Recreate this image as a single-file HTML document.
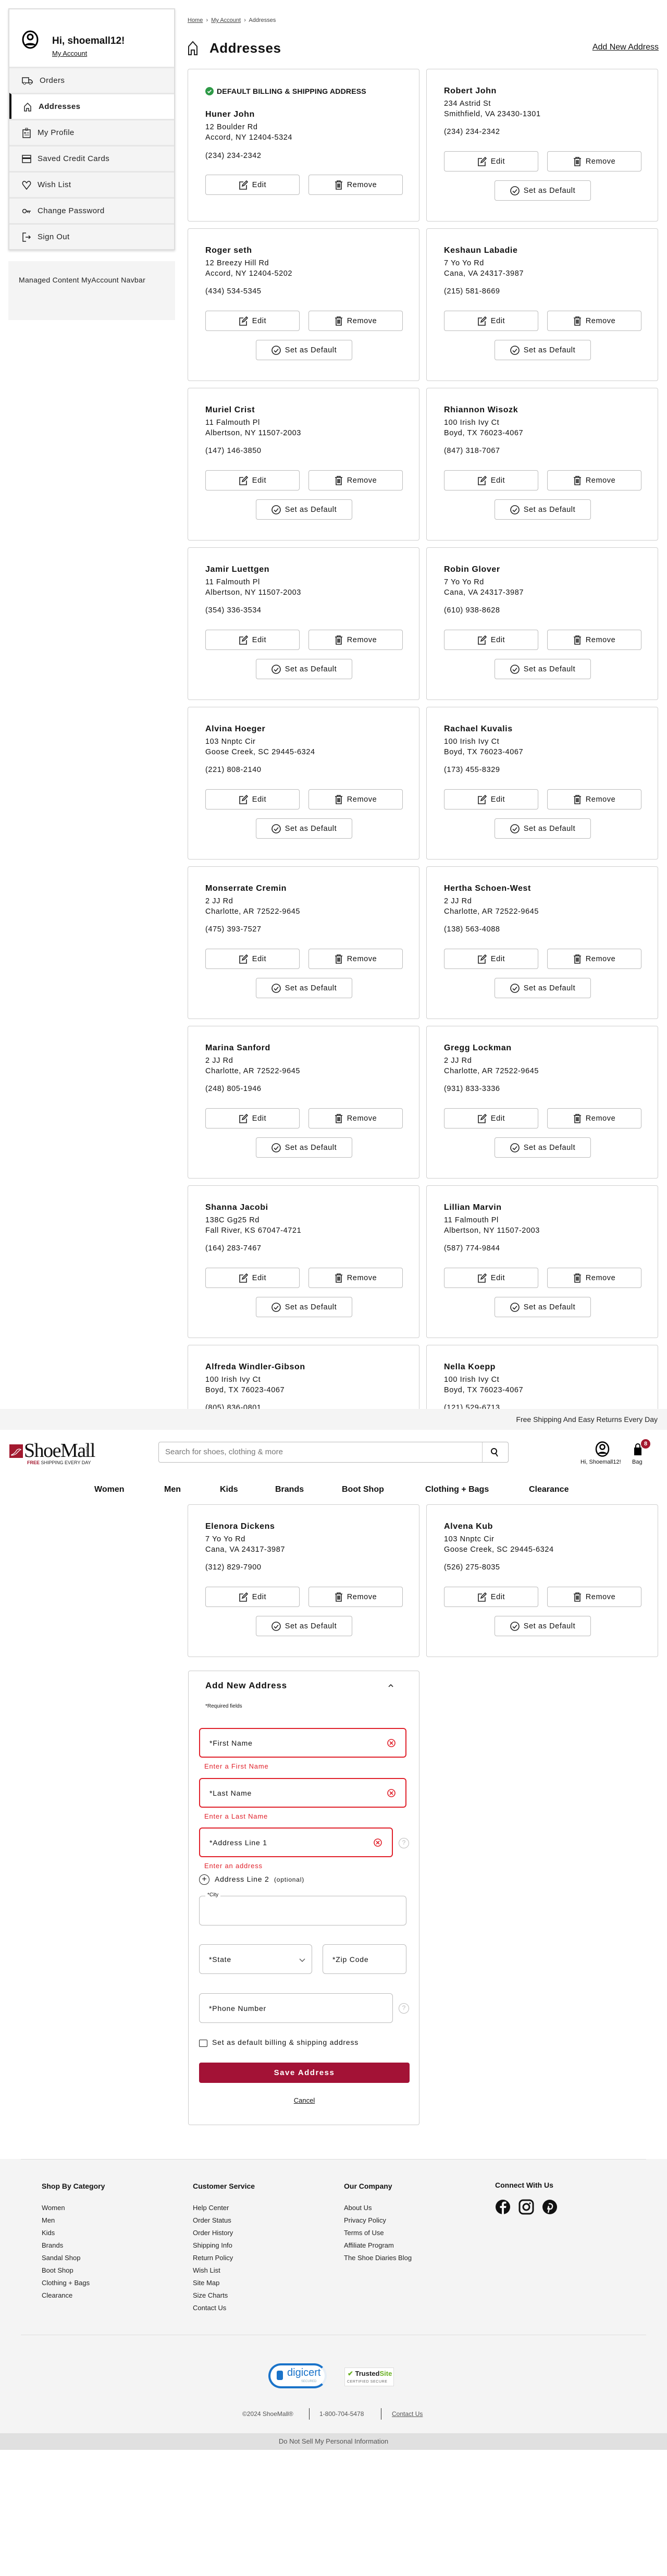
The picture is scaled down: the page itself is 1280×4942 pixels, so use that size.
<!DOCTYPE html>
<html><head><meta charset="utf-8">
<style>
*{box-sizing:border-box;margin:0;padding:0}
body{width:1280px;height:4942px;position:relative;background:#fff;font-family:"Liberation Sans",sans-serif;color:#111;overflow:hidden}
.abs{position:absolute}
.side{left:16px;top:16px;width:320px;height:464px;border:2px solid #ddd;box-shadow:0 2px 4px rgba(0,0,0,.15);background:#fff}
.side .hd{height:110px;position:relative}
.mi{height:50px;background:#f4f4f4;border-top:3px solid #e6e6e6;display:flex;align-items:center;padding-left:24px;font-size:15px;color:#222;letter-spacing:.4px}
.mi svg{margin-right:12px}
.mi.act{background:#fff;border-left:4px solid #111;font-weight:bold;padding-left:22px}
.card{position:absolute;width:445px;height:293px;border:1px solid #cfcfcf;border-radius:4px;background:#fff;letter-spacing:.6px}
.card .n{position:absolute;left:33px;top:33px;font-size:16px;font-weight:bold}
.card .a{position:absolute;left:33px;top:56px;font-size:14.5px;line-height:20px}
.card .p{position:absolute;left:33px;top:112px;font-size:14.5px}
.btn{position:absolute;height:39px;border:1px solid #bbb;border-radius:4px;display:flex;align-items:center;justify-content:center;font-size:14.5px;background:#fff;gap:8px}
.b1{left:33px;top:157px;width:181px}
.b2{left:231px;top:157px;width:181px}
.b3{left:130px;top:213px;width:185px}
.fl{position:absolute;left:20px;border:1px solid #bbb;border-radius:6px;font-size:14px;padding-left:18px;display:flex;align-items:center;height:57px;letter-spacing:.8px}
.err{border:2px solid #e0202a}
.et{position:absolute;left:30px;color:#e0202a;font-size:13px;letter-spacing:.8px}
.fc h4{font-size:14px;margin-bottom:22px}
.fc div{font-size:13px;line-height:24px;color:#222}
</style></head><body>

<!-- sidebar -->
<div class="abs side">
 <div class="hd">
  <svg class="abs" style="left:24px;top:40px" width="32" height="36" viewBox="0 0 32 36"><ellipse cx="16" cy="18" rx="14" ry="16" fill="none" stroke="#000" stroke-width="3"/><circle cx="16" cy="13" r="5" fill="none" stroke="#000" stroke-width="3"/><path d="M5 29c3-6 19-6 22 0" fill="#000"/></svg>
  <div class="abs" style="left:82px;top:50px;font-size:19px;font-weight:bold">Hi, shoemall12!</div>
  <div class="abs" style="left:82px;top:77px;font-size:13px;text-decoration:underline">My Account</div>
 </div>
 <div class="mi"><svg width="22" height="16" viewBox="0 0 22 16"><path d="M1 2h12v10H1zM13 6h4l3 3v3h-7" fill="none" stroke="#222" stroke-width="1.5"/><circle cx="5" cy="13" r="2" fill="#fff" stroke="#222"/><circle cx="16" cy="13" r="2" fill="#fff" stroke="#222"/></svg>Orders</div>
 <div class="mi act"><svg width="18" height="18" viewBox="0 0 18 18"><path d="M3 17V8l6-6 6 6v9h-4v-5H7v5z" fill="none" stroke="#222" stroke-width="1.5"/></svg>Addresses</div>
 <div class="mi"><svg width="18" height="20" viewBox="0 0 18 20"><rect x="2" y="4" width="14" height="15" fill="none" stroke="#222" stroke-width="1.5"/><path d="M7 1h4v4H7z" fill="none" stroke="#222"/><circle cx="6" cy="10" r="1.5" fill="#222"/><path d="M9 10h5M5 14h9" stroke="#222"/></svg>My Profile</div>
 <div class="mi"><svg width="18" height="16" viewBox="0 0 18 16"><rect x="1" y="1" width="16" height="14" fill="none" stroke="#222" stroke-width="1.5"/><rect x="1" y="5" width="16" height="3" fill="#222"/></svg>Saved Credit Cards</div>
 <div class="mi"><svg width="18" height="18" viewBox="0 0 18 18"><path d="M9 17L2 8C0 4 3 1 6 2c1 .5 2 1.5 3 3 1-1.5 2-2.5 3-3 3-1 6 2 4 6z" fill="none" stroke="#222" stroke-width="1.5"/></svg>Wish List</div>
 <div class="mi"><svg width="18" height="14" viewBox="0 0 18 14"><circle cx="5" cy="7" r="3.5" fill="none" stroke="#222" stroke-width="1.5"/><path d="M8.5 7H17M14 7v4M11 7v3" stroke="#222" stroke-width="1.5"/></svg>Change Password</div>
 <div class="mi"><svg width="18" height="20" viewBox="0 0 18 20"><path d="M8 2H2v16h6M7 10h9M13 7l3 3-3 3" fill="none" stroke="#222" stroke-width="1.5"/></svg>Sign Out</div>
</div>
<div class="abs" style="left:16px;top:501px;width:320px;height:113px;background:#f4f4f4;padding:24px 20px;font-size:14px;line-height:24px;color:#222;letter-spacing:.3px">Managed Content MyAccount Navbar</div>

<!-- breadcrumb / title -->
<div class="abs" style="left:360px;top:33px;font-size:11px;color:#444"><u>Home</u> &nbsp;›&nbsp; <u>My Account</u> &nbsp;›&nbsp; Addresses</div>
<svg class="abs" style="left:360px;top:78px" width="20" height="28" viewBox="0 0 20 28"><path d="M2 27V11l8-9 8 9v16h-5v-9H7v9z" fill="none" stroke="#222" stroke-width="2"/></svg>
<div class="abs" style="left:402px;top:77px;font-size:26px;font-weight:bold;letter-spacing:.5px">Addresses</div>
<div class="abs" style="right:16px;top:82px;font-size:16px;text-decoration:underline">Add New Address</div>

<!-- cards -->
<div id="cards"></div>
<div class="card" style="left:360px;top:132px">
 <div class="abs" style="left:33px;top:34px;font-size:14px;font-weight:bold;display:flex;align-items:center;gap:6px;letter-spacing:.2px"><svg width="16" height="16" viewBox="0 0 16 16"><circle cx="8" cy="8" r="8" fill="#2e9a47"/><path d="M4.5 8.3l2.3 2.3 4.5-4.8" fill="none" stroke="#fff" stroke-width="1.8"/></svg>DEFAULT BILLING &amp; SHIPPING ADDRESS</div>
 <div class="n" style="top:78px">Huner John</div>
 <div class="a" style="top:101px">12 Boulder Rd<br>Accord, NY 12404-5324</div>
 <div class="p" style="top:158px">(234) 234-2342</div>
 <div class="btn b1" style="top:202px"><svg width="18" height="18" viewBox="0 0 18 18"><path d="M9 3H2v14h13V9" fill="none" stroke="#222" stroke-width="1.6"/><path d="M7 11l1-3 7-7 2 2-7 7z" fill="none" stroke="#222" stroke-width="1.6"/></svg>Edit</div>
 <div class="btn b2" style="top:202px"><svg width="16" height="18" viewBox="0 0 16 18"><path d="M1 3h14M5 3V1h6v2M3 3v14h10V3M6 6v8M8 6v8M10 6v8" fill="none" stroke="#222" stroke-width="1.6"/></svg>Remove</div>
</div>

<script>
var data=[
["Robert John","234 Astrid St","Smithfield, VA 23430-1301","(234) 234-2342"],
["Roger seth","12 Breezy Hill Rd","Accord, NY 12404-5202","(434) 534-5345"],
["Keshaun Labadie","7 Yo Yo Rd","Cana, VA 24317-3987","(215) 581-8669"],
["Muriel Crist","11 Falmouth Pl","Albertson, NY 11507-2003","(147) 146-3850"],
["Rhiannon Wisozk","100 Irish Ivy Ct","Boyd, TX 76023-4067","(847) 318-7067"],
["Jamir Luettgen","11 Falmouth Pl","Albertson, NY 11507-2003","(354) 336-3534"],
["Robin Glover","7 Yo Yo Rd","Cana, VA 24317-3987","(610) 938-8628"],
["Alvina Hoeger","103 Nnptc Cir","Goose Creek, SC 29445-6324","(221) 808-2140"],
["Rachael Kuvalis","100 Irish Ivy Ct","Boyd, TX 76023-4067","(173) 455-8329"],
["Monserrate Cremin","2 JJ Rd","Charlotte, AR 72522-9645","(475) 393-7527"],
["Hertha Schoen-West","2 JJ Rd","Charlotte, AR 72522-9645","(138) 563-4088"],
["Marina Sanford","2 JJ Rd","Charlotte, AR 72522-9645","(248) 805-1946"],
["Gregg Lockman","2 JJ Rd","Charlotte, AR 72522-9645","(931) 833-3336"],
["Shanna Jacobi","138C Gg25 Rd","Fall River, KS 67047-4721","(164) 283-7467"],
["Lillian Marvin","11 Falmouth Pl","Albertson, NY 11507-2003","(587) 774-9844"],
["Alfreda Windler-Gibson","100 Irish Ivy Ct","Boyd, TX 76023-4067","(805) 836-0801"],
["Nella Koepp","100 Irish Ivy Ct","Boyd, TX 76023-4067","(121) 529-6713"],
["Elenora Dickens","7 Yo Yo Rd","Cana, VA 24317-3987","(312) 829-7900"],
["Alvena Kub","103 Nnptc Cir","Goose Creek, SC 29445-6324","(526) 275-8035"]];
var edit='<svg width="18" height="18" viewBox="0 0 18 18"><path d="M9 3H2v14h13V9" fill="none" stroke="#222" stroke-width="1.6"/><path d="M7 11l1-3 7-7 2 2-7 7z" fill="none" stroke="#222" stroke-width="1.6"/></svg>';
var rem='<svg width="16" height="18" viewBox="0 0 16 18"><path d="M1 3h14M5 3V1h6v2M3 3v14h10V3M6 6v8M8 6v8M10 6v8" fill="none" stroke="#222" stroke-width="1.6"/></svg>';
var chk='<svg width="18" height="18" viewBox="0 0 18 18"><circle cx="9" cy="9" r="8" fill="none" stroke="#222" stroke-width="1.6"/><path d="M5 9.5l3 3 5-6" fill="none" stroke="#222" stroke-width="1.6"/></svg>';
var h='';
for(var i=0;i<data.length;i++){var k=i+1,r=Math.floor(k/2),c=k%2,d=data[i];
h+='<div class="card" style="left:'+(c?818:360)+'px;top:'+(132+r*306)+'px"><div class="n">'+d[0]+'</div><div class="a">'+d[1]+'<br>'+d[2]+'</div><div class="p">'+d[3]+'</div><div class="btn b1">'+edit+'Edit</div><div class="btn b2">'+rem+'Remove</div><div class="btn b3">'+chk+'Set as Default</div></div>';}
document.getElementById('cards').innerHTML=h;
</script>

<!-- header overlay -->
<div class="abs" style="left:0;top:2703px;width:1280px;height:180px;background:#fff;z-index:5">
 <div class="abs" style="left:0;top:0;width:1280px;height:40px;background:#f4f4f4;text-align:right;padding-right:18px;line-height:40px;font-size:14px;color:#222">Free Shipping And Easy Returns Every Day</div>
 <div class="abs" style="left:18px;top:68px;width:26px;height:26px;background:#a3192f"></div>
 <svg class="abs" style="left:20px;top:72px" width="22" height="20" viewBox="0 0 22 20"><path d="M2 16c4-1 8-5 10-9 2-2 6-3 8-1-3 1-5 4-9 8-3 2-6 3-9 3z" fill="none" stroke="#fff" stroke-width="1.3"/></svg>
 <div class="abs" style="left:46px;top:60px;font-family:'Liberation Serif',serif;font-size:38px;letter-spacing:-1.5px;line-height:40px">ShoeMall</div>
 <div class="abs" style="left:173px;top:70px;font-size:9px;transform:rotate(90deg);transform-origin:left top;color:#444">.com</div>
 <div class="abs" style="left:52px;top:98px;font-size:9px;color:#222"><b style="color:#a3192f">FREE</b> SHIPPING EVERY DAY</div>
 <div class="abs" style="left:304px;top:63px;width:672px;height:40px;border:1px solid #bbb;border-radius:4px;font-size:15px;color:#777;padding-left:12px;line-height:38px">Search for shoes, clothing &amp; more</div>
 <div class="abs" style="left:925px;top:64px;width:1px;height:38px;background:#ccc"></div>
 <svg class="abs" style="left:941px;top:74px" width="16" height="18" viewBox="0 0 16 18"><circle cx="7" cy="7" r="5" fill="none" stroke="#111" stroke-width="2"/><path d="M10 11l4 6" stroke="#111" stroke-width="2"/></svg>
 <svg class="abs" style="left:1142px;top:62px" width="28" height="30" viewBox="0 0 28 30"><ellipse cx="14" cy="15" rx="12" ry="13.5" fill="none" stroke="#000" stroke-width="2.5"/><circle cx="14" cy="11" r="4.5" fill="none" stroke="#000" stroke-width="2.5"/><path d="M5 24c3-5 15-5 18 0" fill="#000"/></svg>
 <div class="abs" style="left:1114px;top:96px;font-size:11px">Hi, Shoemall12!</div>
 <svg class="abs" style="left:1214px;top:66px" width="20" height="24" viewBox="0 0 20 24"><path d="M3 8h14v15H3z" fill="#000"/><path d="M6 8V5a4 4 0 018 0v3" fill="none" stroke="#000" stroke-width="2"/></svg>
 <div class="abs" style="left:1230px;top:58px;width:18px;height:18px;border-radius:50%;background:#a3192f;color:#fff;font-size:11px;text-align:center;line-height:18px;font-weight:bold">8</div>
 <div class="abs" style="left:1213px;top:96px;font-size:11px">Bag</div>
 <div class="abs" style="top:146px;left:181px;font-size:16px;font-weight:bold">Women</div>
 <div class="abs" style="top:146px;left:315px;font-size:16px;font-weight:bold">Men</div>
 <div class="abs" style="top:146px;left:422px;font-size:16px;font-weight:bold">Kids</div>
 <div class="abs" style="top:146px;left:528px;font-size:16px;font-weight:bold">Brands</div>
 <div class="abs" style="top:146px;left:656px;font-size:16px;font-weight:bold">Boot Shop</div>
 <div class="abs" style="top:146px;left:816px;font-size:16px;font-weight:bold">Clothing + Bags</div>
 <div class="abs" style="top:146px;left:1015px;font-size:16px;font-weight:bold">Clearance</div>
</div>

<!-- add new address form -->
<div class="abs" style="left:361px;top:3205px;width:444px;height:872px;border:1px solid #ccc;border-radius:4px;background:#fff">
 <div class="abs" style="left:32px;top:18px;font-size:17px;font-weight:bold;letter-spacing:.8px">Add New Address</div>
 <svg class="abs" style="left:383px;top:24px" width="10" height="7" viewBox="0 0 10 7"><path d="M1 6l4-4 4 4" fill="none" stroke="#111" stroke-width="1.5"/></svg>
 <div class="abs" style="left:32px;top:62px;font-size:10px">*Required fields</div>
 <div class="fl err" style="top:109px;width:398px">*First Name</div>
 <svg class="abs" style="left:381px;top:130px" width="16" height="16" viewBox="0 0 16 16"><circle cx="8" cy="8" r="7" fill="none" stroke="#e0202a" stroke-width="1.6"/><path d="M5 5l6 6M11 5l-6 6" stroke="#e0202a" stroke-width="1.6"/></svg>
 <div class="et" style="top:175px">Enter a First Name</div>
 <div class="fl err" style="top:205px;width:398px">*Last Name</div>
 <svg class="abs" style="left:381px;top:226px" width="16" height="16" viewBox="0 0 16 16"><circle cx="8" cy="8" r="7" fill="none" stroke="#e0202a" stroke-width="1.6"/><path d="M5 5l6 6M11 5l-6 6" stroke="#e0202a" stroke-width="1.6"/></svg>
 <div class="et" style="top:271px">Enter a Last Name</div>
 <div class="fl err" style="top:300px;width:372px">*Address Line 1</div>
 <svg class="abs" style="left:355px;top:321px" width="16" height="16" viewBox="0 0 16 16"><circle cx="8" cy="8" r="7" fill="none" stroke="#e0202a" stroke-width="1.6"/><path d="M5 5l6 6M11 5l-6 6" stroke="#e0202a" stroke-width="1.6"/></svg>
 <div class="abs" style="left:403px;top:320px;width:20px;height:20px;border:1.5px solid #bbb;border-radius:50%;color:#bbb;font-size:12px;text-align:center;line-height:17px">?</div>
 <div class="et" style="top:366px">Enter an address</div>
 <div class="abs" style="left:20px;top:390px;width:20px;height:20px;border:1.5px solid #222;border-radius:50%;text-align:center;line-height:17px;font-size:16px">+</div>
 <div class="abs" style="left:50px;top:391px;font-size:14px;letter-spacing:.8px">Address Line 2 &nbsp;<span style="font-size:12px">(optional)</span></div>
 <div class="fl" style="top:431px;width:398px;height:57px"></div>
 <div class="abs" style="left:32px;top:424px;font-size:10px;background:#fff;padding:0 4px">*City</div>
 <div class="fl" style="top:524px;width:217px">*State</div>
 <svg class="abs" style="left:212px;top:551px" width="12" height="8" viewBox="0 0 12 8"><path d="M1 1l5 5 5-5" fill="none" stroke="#555" stroke-width="1.4"/></svg>
 <div class="fl" style="left:257px;top:524px;width:161px">*Zip Code</div>
 <div class="fl" style="top:618px;width:372px">*Phone Number</div>
 <div class="abs" style="left:403px;top:637px;width:20px;height:20px;border:1.5px solid #bbb;border-radius:50%;color:#bbb;font-size:12px;text-align:center;line-height:17px">?</div>
 <div class="abs" style="left:20px;top:707px;width:16px;height:14px;border:1.5px solid #222;border-radius:2px"></div>
 <div class="abs" style="left:45px;top:704px;font-size:14px;letter-spacing:.8px">Set as default billing &amp; shipping address</div>
 <div class="abs" style="left:20px;top:751px;width:404px;height:39px;background:#a31236;border-radius:4px;color:#fff;font-weight:bold;font-size:15px;text-align:center;line-height:39px;letter-spacing:1.5px">Save Address</div>
 <div class="abs" style="left:0;width:444px;top:816px;font-size:13px;text-align:center"><u>Cancel</u></div>
</div>

<!-- footer -->
<div class="abs" style="left:0;top:4142px;width:1280px;height:526px;background:#f4f4f4">
 <div class="abs" style="left:40px;top:0;width:1200px;height:1px;background:#ddd"></div>
 <div class="abs fc" style="left:80px;top:44px"><h4>Shop By Category</h4><div>Women<br>Men<br>Kids<br>Brands<br>Sandal Shop<br>Boot Shop<br>Clothing + Bags<br>Clearance</div></div>
 <div class="abs fc" style="left:370px;top:44px"><h4>Customer Service</h4><div>Help Center<br>Order Status<br>Order History<br>Shipping Info<br>Return Policy<br>Wish List<br>Site Map<br>Size Charts<br>Contact Us</div></div>
 <div class="abs fc" style="left:660px;top:44px"><h4>Our Company</h4><div>About Us<br>Privacy Policy<br>Terms of Use<br>Affiliate Program<br>The Shoe Diaries Blog</div></div>
 <div class="abs fc" style="left:950px;top:42px"><h4>Connect With Us</h4></div>
 <svg class="abs" style="left:950px;top:77px" width="120" height="30" viewBox="0 0 120 30"><circle cx="15" cy="15" r="14" fill="#111"/><path d="M17 29V17h4l.5-4H17v-2.5c0-1.2.4-2 2-2h2.5V5c-.5 0-2-.2-3.5-.2-3.3 0-5 2-5 5.2V13H9.5v4H13v12z" fill="#f4f4f4"/><rect x="47" y="2" width="26" height="26" rx="7" fill="none" stroke="#111" stroke-width="3"/><circle cx="60" cy="15" r="6" fill="none" stroke="#111" stroke-width="3"/><circle cx="67" cy="8" r="1.6" fill="#111"/><circle cx="105" cy="15" r="14" fill="#111"/><path d="M103 9c5-1 8 2 7 6-1 4-4 5-6 3l-2 8M103 13l-2 7" fill="none" stroke="#f4f4f4" stroke-width="2.3"/></svg>
 <div class="abs" style="left:40px;top:337px;width:1200px;height:1px;background:#ddd"></div>
 <div class="abs" style="left:515px;top:392px;width:112px;height:48px;border-radius:24px;background:#fff;border:4px solid #1a73c9;border-right-color:#e6eef6"></div>
 <div class="abs" style="left:531px;top:406px;width:12px;height:18px;background:#1a73c9;border-radius:3px"></div>
 <div class="abs" style="left:551px;top:399px;font-size:20px;color:#1a73c9">digicert</div>
 <div class="abs" style="left:578px;top:424px;font-size:6px;color:#8ab">SECURED</div>
 <div class="abs" style="left:661px;top:400px;width:95px;height:36px;background:#fff;border:1px solid #ddd"></div>
 <div class="abs" style="left:667px;top:404px;font-size:13px;font-weight:bold;color:#222"><span style="color:#6ab023">&#10004;</span> Trusted<span style="color:#6ab023">Site</span></div>
 <div class="abs" style="left:666px;top:424px;font-size:7px;color:#666;letter-spacing:.6px">CERTIFIED SECURE</div>
 <div class="abs" style="left:465px;top:482px;font-size:12px;color:#555">©2024 ShoeMall®</div>
 <div class="abs" style="left:593px;top:478px;width:1px;height:22px;background:#333"></div>
 <div class="abs" style="left:613px;top:482px;font-size:12px;color:#555">1-800-704-5478</div>
 <div class="abs" style="left:731px;top:478px;width:1px;height:22px;background:#333"></div>
 <div class="abs" style="left:752px;top:482px;font-size:12px;color:#555;text-decoration:underline">Contact Us</div>
</div>
<div class="abs" style="left:0;top:4668px;width:1280px;height:32px;background:#e0e0e0;text-align:center;line-height:32px;font-size:13px;color:#555">Do Not Sell My Personal Information</div>
</body></html>
